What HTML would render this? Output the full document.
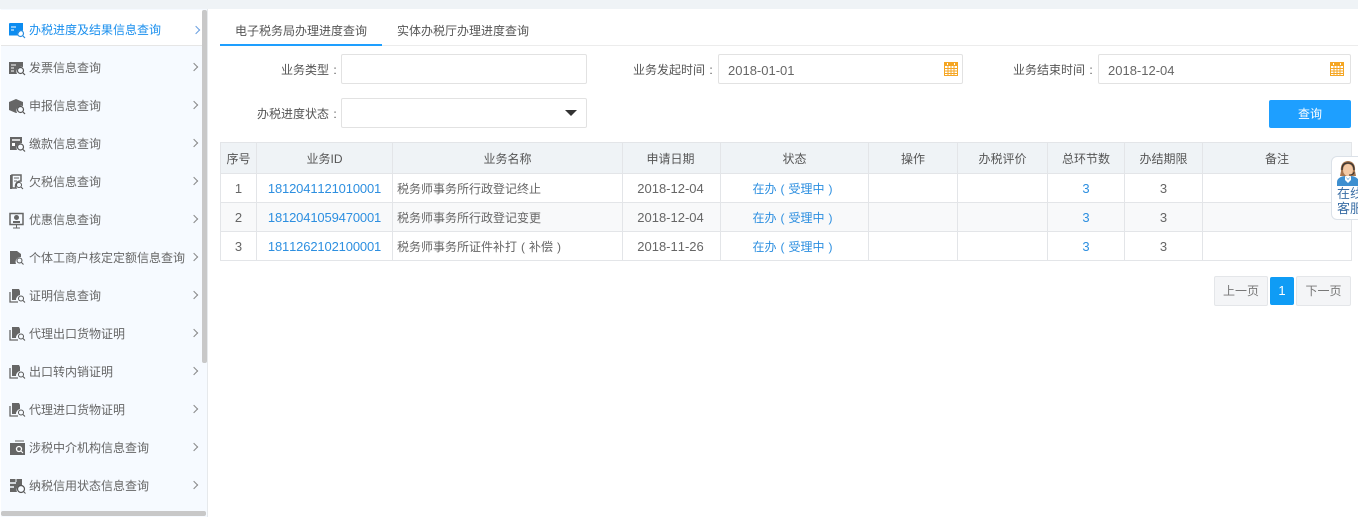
<!DOCTYPE html>
<html lang="zh"><head><meta charset="utf-8"><style>
*{box-sizing:border-box;font-kerning:none}
html,body{margin:0;padding:0;width:1358px;height:517px;overflow:hidden;background:#fff;font:12px/1 "Liberation Sans","Noto Sans CJK SC",sans-serif;color:#555}
.a{position:absolute;white-space:nowrap}
#top{position:absolute;left:0;top:0;width:1358px;height:9px;background:#eff3f6}
#side{position:absolute;left:1px;top:9px;width:207px;height:508px;background:#f6faff;border-right:1px solid #e6e9ec}
.m{position:absolute;left:28px;line-height:16px;color:#666;font-size:12px}
.ch{position:absolute;left:193px;width:6px;height:6px;border-top:1px solid #888;border-right:1px solid #888;transform:rotate(45deg)}
.ic{position:absolute;left:8px}
.lb{position:absolute;text-align:right;line-height:16px;color:#555}
.ip{position:absolute;background:#fff;border:1px solid #e2e2e2;border-radius:2px}
.dt{position:absolute;left:9px;top:8px;font-size:13px;line-height:16px;color:#666}
.cv{position:absolute}
.th,.td{position:absolute;text-align:center;line-height:16px;white-space:nowrap}
.th{color:#555}.td{color:#666}
.n{font-size:13px}
.id{font-size:13px;letter-spacing:-.15px}
.bl{color:#2d8fe0}
.hl{position:absolute;background:#e3e5e8}
i{display:inline-block;width:12px;text-align:center;font-style:normal}
</style></head><body>
<div id="top"></div>
<div id="side">
<div style="position:absolute;left:0;top:1px;width:201px;height:36px;background:#fff;border-bottom:1px solid #e6e6e6"></div>
<div style="position:absolute;left:201px;top:1px;width:5px;height:353px;background:#c8c8c8;border-radius:2px"></div>
<div style="position:absolute;left:0;top:502px;width:205px;height:5px;background:#c8c8c8;border-radius:2px"></div>
</div>
<svg class="ic" style="top:23px" width="18" height="16" viewBox="0 0 18 16"><path d="M1 1q0-1 1-1h13v7.500a5 5 0 0 0-5 5H1z" fill="#0c8cf0"/><path d="M3 4h5M3 7h3" stroke="#fff"/><circle cx="12.500" cy="10.500" r="3" fill="none" stroke="#2d8fe0" stroke-width="1.200"/><path d="M15 13l2 2" stroke="#2d8fe0" stroke-width="1.200"/></svg>
<svg class="ic" style="top:61px" width="18" height="16" viewBox="0 0 18 16"><path d="M1 1h14v5a5 5 0 0 0-6 7H1z" fill="#666"/><path d="M3 4h5M3 7h3M3 10h3" stroke="#fff"/><circle cx="12.500" cy="9.500" r="3" fill="none" stroke="#555" stroke-width="1.200"/><path d="M15 12l2 2" stroke="#555" stroke-width="1.200"/></svg>
<svg class="ic" style="top:98px" width="18" height="17" viewBox="0 0 18 17"><path d="M1 4l7-3 7 3v4a5 5 0 0 0-6 7l-1 0-7-3z" fill="#666"/><circle cx="12.500" cy="11.500" r="3" fill="none" stroke="#555" stroke-width="1.200"/><path d="M15 14l2 2" stroke="#555" stroke-width="1.200"/></svg>
<svg class="ic" style="top:136px" width="18" height="17" viewBox="0 0 18 17"><path d="M2 1h12v6a5 5 0 0 0-5 7H2z" fill="#666"/><path d="M4 4h8" stroke="#fff" stroke-width="1.500"/><rect x="4" y="7" width="3" height="3" fill="#fff"/><circle cx="12.500" cy="11" r="3" fill="none" stroke="#555" stroke-width="1.200"/><path d="M15 13.500l2 2" stroke="#555" stroke-width="1.200"/></svg>
<svg class="ic" style="top:174px;left:9px" width="15" height="17" viewBox="0 0 15 17"><path d="M1 1h2v14H1z" fill="#666"/><path d="M3 1h9v6a5 5 0 0 0-5 7H3z" fill="none" stroke="#666" stroke-width="1.500"/><path d="M5 4h5M5 7h3" stroke="#666"/><circle cx="10" cy="11" r="2.500" fill="none" stroke="#555"/><path d="M12 13l2 2" stroke="#555"/></svg>
<svg class="ic" style="top:212px;left:9px" width="16" height="17" viewBox="0 0 16 17"><rect x="1" y="1.500" width="13" height="11" fill="none" stroke="#666" stroke-width="1.500"/><circle cx="7.500" cy="5.500" r="2.500" fill="#666"/><path d="M4 11h7v-2H4z" fill="#666"/><path d="M7.500 13v3M4 16h7" stroke="#666"/></svg>
<svg class="ic" style="top:250px;left:9px" width="16" height="16" viewBox="0 0 16 16"><path d="M1 1h7l4 3v3a5 5 0 0 0-5 7H1z" fill="#666"/><circle cx="10.500" cy="10.500" r="2.500" fill="none" stroke="#555"/><path d="M12.500 12.500l2 2" stroke="#555"/></svg>
<svg class="ic" style="top:288px" width="18" height="16" viewBox="0 0 18 16"><path d="M2 4v10h8" fill="none" stroke="#666" stroke-width="1.300"/><path d="M4 1h7l1 2v4a5 5 0 0 0-4 5H4z" fill="#666"/><circle cx="13" cy="10.500" r="2.500" fill="none" stroke="#555"/><path d="M15 12.500l2 2" stroke="#555"/></svg>
<svg class="ic" style="top:326px" width="18" height="16" viewBox="0 0 18 16"><path d="M2 4v10h8" fill="none" stroke="#666" stroke-width="1.300"/><path d="M4 1h7l1 2v4a5 5 0 0 0-4 5H4z" fill="#666"/><circle cx="13" cy="10.500" r="2.500" fill="none" stroke="#555"/><path d="M15 12.500l2 2" stroke="#555"/></svg>
<svg class="ic" style="top:364px" width="18" height="16" viewBox="0 0 18 16"><path d="M2 4v10h8" fill="none" stroke="#666" stroke-width="1.300"/><path d="M4 1h7l1 2v4a5 5 0 0 0-4 5H4z" fill="#666"/><circle cx="13" cy="10.500" r="2.500" fill="none" stroke="#555"/><path d="M15 12.500l2 2" stroke="#555"/></svg>
<svg class="ic" style="top:402px" width="18" height="16" viewBox="0 0 18 16"><path d="M2 4v10h8" fill="none" stroke="#666" stroke-width="1.300"/><path d="M4 1h7l1 2v4a5 5 0 0 0-4 5H4z" fill="#666"/><circle cx="13" cy="10.500" r="2.500" fill="none" stroke="#555"/><path d="M15 12.500l2 2" stroke="#555"/></svg>
<svg class="ic" style="top:440px;left:10px" width="15" height="16" viewBox="0 0 15 16"><path d="M5 1h9" stroke="#666"/><rect x="0" y="3" width="15" height="12" fill="#666"/><circle cx="9" cy="9" r="2.500" fill="none" stroke="#fff" stroke-width="1.300"/><path d="M11 11l2 2" stroke="#fff"/></svg>
<svg class="ic" style="top:478px" width="18" height="17" viewBox="0 0 18 17"><path d="M2 1h12v6a5 5 0 0 0-5 7H2z" fill="#666"/><path d="M2 5h6M2 9h4" stroke="#f6faff" stroke-width="1.500"/><path d="M8 1v3" stroke="#f6faff"/><circle cx="13" cy="11" r="3.500" fill="#f6faff" stroke="#555" stroke-width="1.200"/><path d="M15.500 13.500l2 2" stroke="#555"/></svg>
<div class="m" style="top:22px;left:29px;color:#1a8fee">办税进度及结果信息查询</div><div class="ch" style="top:27px;left:193px;border-color:#6a9fe0"></div>
<div class="m" style="top:60px;left:29px">发票信息查询</div><div class="ch" style="top:64px;left:191px"></div>
<div class="m" style="top:98px;left:29px">申报信息查询</div><div class="ch" style="top:102px;left:191px"></div>
<div class="m" style="top:136px;left:29px">缴款信息查询</div><div class="ch" style="top:140px;left:191px"></div>
<div class="m" style="top:174px;left:29px">欠税信息查询</div><div class="ch" style="top:178px;left:191px"></div>
<div class="m" style="top:212px;left:29px">优惠信息查询</div><div class="ch" style="top:216px;left:191px"></div>
<div class="m" style="top:250px;left:29px">个体工商户核定定额信息查询</div><div class="ch" style="top:254px;left:191px"></div>
<div class="m" style="top:288px;left:29px">证明信息查询</div><div class="ch" style="top:292px;left:191px"></div>
<div class="m" style="top:326px;left:29px">代理出口货物证明</div><div class="ch" style="top:330px;left:191px"></div>
<div class="m" style="top:364px;left:29px">出口转内销证明</div><div class="ch" style="top:368px;left:191px"></div>
<div class="m" style="top:402px;left:29px">代理进口货物证明</div><div class="ch" style="top:406px;left:191px"></div>
<div class="m" style="top:440px;left:29px">涉税中介机构信息查询</div><div class="ch" style="top:444px;left:191px"></div>
<div class="m" style="top:478px;left:29px">纳税信用状态信息查询</div><div class="ch" style="top:482px;left:191px"></div>

<div class="a" style="left:235px;top:23px;line-height:16px">电子税务局办理进度查询</div>
<div class="a" style="left:397px;top:23px;line-height:16px">实体办税厅办理进度查询</div>
<div class="hl" style="left:220px;top:45px;width:1138px;height:1px;background:#ececec"></div>
<div style="position:absolute;left:220px;top:44px;width:162px;height:2px;background:#1e9fff"></div>

<div class="lb a" style="left:281px;top:62px">业务类型<i>:</i></div>
<div class="ip" style="left:341px;top:54px;width:246px;height:30px"></div>
<div class="lb a" style="left:257px;top:106px">办税进度状态<i>:</i></div>
<div class="ip" style="left:341px;top:98px;width:246px;height:30px"><div style="position:absolute;left:223px;top:11px;border-left:6px solid transparent;border-right:6px solid transparent;border-top:6px solid #333"></div></div>
<div class="lb a" style="left:633px;top:62px">业务发起时间<i>:</i></div>
<div class="ip" style="left:718px;top:54px;width:245px;height:30px"><div class="dt">2018-01-01</div>
<svg class="cv" style="left:225px;top:7px" width="14" height="14" viewBox="0 0 14 14"><rect width="14" height="14" fill="#f5a623"/><rect x="1" y="4" width="12" height="9" fill="#fff"/><path d="M1 6.500h12M1 9h12M1 11.500h12M4 4v9M7 4v9M10 4v9" stroke="#f5a623"/><path d="M3.500 1v2M10.500 1v2" stroke="#fff"/></svg></div>
<div class="lb a" style="left:1013px;top:62px">业务结束时间<i>:</i></div>
<div class="ip" style="left:1098px;top:54px;width:253px;height:30px"><div class="dt">2018-12-04</div>
<svg class="cv" style="left:231px;top:7px" width="14" height="14" viewBox="0 0 14 14"><rect width="14" height="14" fill="#f5a623"/><rect x="1" y="4" width="12" height="9" fill="#fff"/><path d="M1 6.500h12M1 9h12M1 11.500h12M4 4v9M7 4v9M10 4v9" stroke="#f5a623"/><path d="M3.500 1v2M10.500 1v2" stroke="#fff"/></svg></div>
<div class="a" style="left:1269px;top:100px;width:82px;height:28px;background:#1e9fff;border-radius:2px;color:#fff;text-align:center;line-height:28px">查询</div>

<div style="position:absolute;left:220px;top:142px;width:1132px;height:32px;background:#eff3f6"></div>
<div style="position:absolute;left:220px;top:203px;width:1132px;height:29px;background:#f8f9fa"></div>
<div class="hl" style="left:220px;top:142px;width:1132px;height:1px"></div>
<div class="hl" style="left:220px;top:173px;width:1132px;height:1px"></div>
<div class="hl" style="left:220px;top:202px;width:1132px;height:1px"></div>
<div class="hl" style="left:220px;top:231px;width:1132px;height:1px"></div>
<div class="hl" style="left:220px;top:260px;width:1132px;height:1px"></div>
<div class="hl" style="left:220px;top:142px;width:1px;height:119px"></div>
<div class="hl" style="left:256px;top:142px;width:1px;height:119px"></div>
<div class="hl" style="left:392px;top:142px;width:1px;height:119px"></div>
<div class="hl" style="left:622px;top:142px;width:1px;height:119px"></div>
<div class="hl" style="left:720px;top:142px;width:1px;height:119px"></div>
<div class="hl" style="left:868px;top:142px;width:1px;height:119px"></div>
<div class="hl" style="left:957px;top:142px;width:1px;height:119px"></div>
<div class="hl" style="left:1047px;top:142px;width:1px;height:119px"></div>
<div class="hl" style="left:1124px;top:142px;width:1px;height:119px"></div>
<div class="hl" style="left:1202px;top:142px;width:1px;height:119px"></div>
<div class="hl" style="left:1351px;top:142px;width:1px;height:119px"></div>

<div class="th" style="left:221px;width:35px;top:151px">序号</div>
<div class="th" style="left:257px;width:135px;top:151px">业务ID</div>
<div class="th" style="left:393px;width:229px;top:151px">业务名称</div>
<div class="th" style="left:622px;width:97px;top:151px">申请日期</div>
<div class="th" style="left:721px;width:147px;top:151px">状态</div>
<div class="th" style="left:869px;width:88px;top:151px">操作</div>
<div class="th" style="left:958px;width:89px;top:151px">办税评价</div>
<div class="th" style="left:1048px;width:76px;top:151px">总环节数</div>
<div class="th" style="left:1125px;width:77px;top:151px">办结期限</div>
<div class="th" style="left:1203px;width:148px;top:151px">备注</div>

<div class="td n" style="left:221px;width:35px;top:181px">1</div>
<div class="td id bl" style="left:257px;width:135px;top:181px">1812041121010001</div>
<div class="td" style="left:397px;top:181px">税务师事务所行政登记终止</div>
<div class="td n" style="left:622px;width:97px;top:181px">2018-12-04</div>
<div class="td bl" style="left:721px;width:147px;top:181px">在办<i>(</i>受理中<i>)</i></div>
<div class="td n bl" style="left:1048px;width:76px;top:181px">3</div>
<div class="td n" style="left:1125px;width:77px;top:181px">3</div>

<div class="td n" style="left:221px;width:35px;top:210px">2</div>
<div class="td id bl" style="left:257px;width:135px;top:210px">1812041059470001</div>
<div class="td" style="left:397px;top:210px">税务师事务所行政登记变更</div>
<div class="td n" style="left:622px;width:97px;top:210px">2018-12-04</div>
<div class="td bl" style="left:721px;width:147px;top:210px">在办<i>(</i>受理中<i>)</i></div>
<div class="td n bl" style="left:1048px;width:76px;top:210px">3</div>
<div class="td n" style="left:1125px;width:77px;top:210px">3</div>

<div class="td n" style="left:221px;width:35px;top:239px">3</div>
<div class="td id bl" style="left:257px;width:135px;top:239px">1811262102100001</div>
<div class="td" style="left:397px;top:239px">税务师事务所证件补打<i>(</i>补偿<i>)</i></div>
<div class="td n" style="left:622px;width:97px;top:239px">2018-11-26</div>
<div class="td bl" style="left:721px;width:147px;top:239px">在办<i>(</i>受理中<i>)</i></div>
<div class="td n bl" style="left:1048px;width:76px;top:239px">3</div>
<div class="td n" style="left:1125px;width:77px;top:239px">3</div>

<div class="a" style="left:1214px;top:276px;width:54px;height:30px;background:#f4f5f7;border:1px solid #e4e6e9;border-radius:2px;text-align:center;line-height:28px;color:#777">上一页</div>
<div class="a" style="left:1270px;top:277px;width:24px;height:28px;background:#0f9cf5;border-radius:2px;text-align:center;line-height:28px;color:#fff;font-size:13px">1</div>
<div class="a" style="left:1296px;top:276px;width:55px;height:30px;background:#f4f5f7;border:1px solid #e4e6e9;border-radius:2px;text-align:center;line-height:28px;color:#777">下一页</div>

<div style="position:absolute;left:1331px;top:156px;width:40px;height:64px;background:#fff;border:1px solid #dbe1e8;border-radius:6px;overflow:hidden">
<svg style="position:absolute;left:5px;top:4px" width="22" height="25" viewBox="0 0 22 25"><path d="M4 10C3 2 8 0 11 0s8 2 7 10l1 5H3z" fill="#a8764f"/><ellipse cx="11" cy="9" rx="5" ry="6" fill="#f3c9a5"/><path d="M5 9C5 3 8 2 11 2s6 1 6 7" fill="none" stroke="#333" stroke-width="1.300"/><path d="M17 11c0 2-2 3-5 3" fill="none" stroke="#333"/><path d="M0 25v-4c0-4 5-6 8-6l3 3 3-3c3 0 8 2 8 6v4z" fill="#3d8fd0"/><path d="M8 15l3 4 3-4 0 4-3 3-3-3z" fill="#fff"/></svg>
<div style="position:absolute;left:5px;top:29px;font-size:13px;line-height:15px;color:#3a6ea5;white-space:nowrap">在线<br>客服</div>
</div>
</body></html>
